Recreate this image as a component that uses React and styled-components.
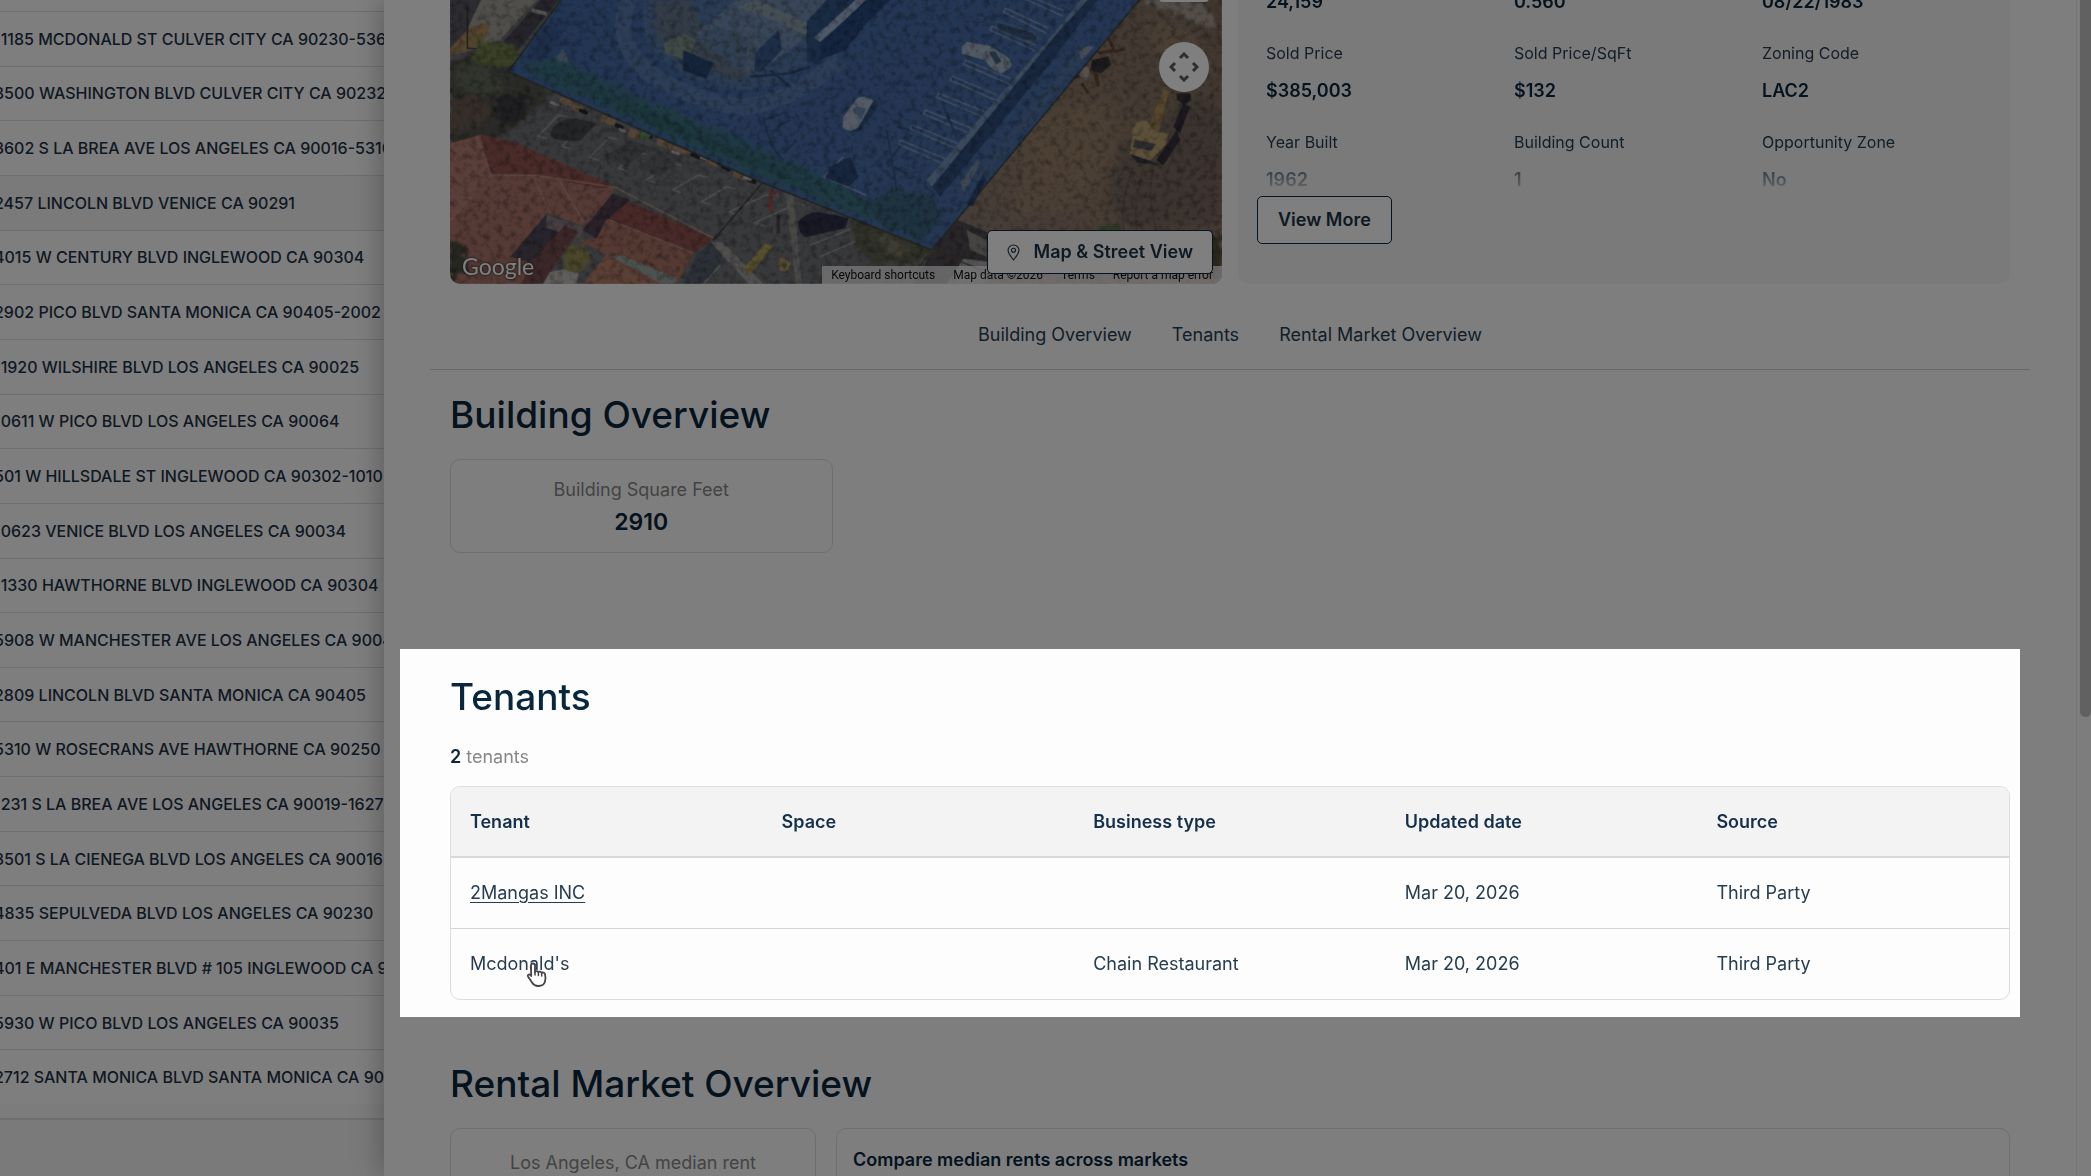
import React from "react";
import styled, { createGlobalStyle, css } from "styled-components";

const color = {
  ink: "#08263c",
  text: "#263c50",
  muted: "#878787",
  line: "#dcdcdc",
  surface: "#fdfdfd",
  tint: "#f4f4f4",
};

const GlobalStyle = createGlobalStyle`
  *, *::before, *::after { box-sizing: border-box; }
  body {
    margin: 0;
    background: ${color.surface};
    color: ${color.text};
    font: 400 18px/28px Inter, "Liberation Sans", sans-serif;
  }
  h2, p, ul, dl, dd { margin: 0; padding: 0; }
  button { font: inherit; color: inherit; cursor: pointer; }
  a { color: inherit; text-decoration: none; }
`;

/* ---------- Page frame ---------- */

const Page = styled.div`
  display: grid;
  grid-template-columns: 384px minmax(0, 1fr);
  grid-template-rows: minmax(0, 1fr);
  height: 100vh;
  overflow: hidden;
`;

const ListPane = styled.aside`
  display: flex;
  flex-direction: column;
  min-height: 0;
  padding-top: 11px;
  overflow: hidden;
`;

const AddressList = styled.ul`
  flex: 1;
  display: grid;
  grid-auto-rows: minmax(0, 1fr);
  list-style: none;
`;

const AddressRow = styled.li`
  display: flex;
  align-items: center;
  margin-left: -6px;
  border-top: 1px solid ${color.line};
  background: ${(p) => (p.$hovered ? "#f5f5f5" : "transparent")};
  color: #1f3346;
  font-size: 16px;
  font-weight: 500;
  line-height: 24px;
  white-space: nowrap;
`;

const ListEdge = styled.div`
  height: 14px;
  background: #f8f8f8;
`;

const ListFooter = styled.footer`
  height: 58px;
  border-top: 2px solid ${color.line};
  background: #f4f4f4;
`;

const Drawer = styled.div`
  position: relative;
  z-index: 1;
  display: grid;
  grid-template-columns: minmax(0, 1fr) 15px;
  background: ${color.surface};
  box-shadow: -4px 0 26px rgba(0, 0, 0, 0.26);
`;

const Content = styled.main`
  margin-top: -12px;
  padding: 0 66px;
`;

const ScrollTrack = styled.div`
  display: flex;
  justify-content: flex-end;
  border-left: 1px solid #efefef;
  background: #fafafa;
`;

const ScrollThumb = styled.div`
  width: 11px;
  height: 61vh;
  border-radius: 0 0 6px 6px;
  background: #c2c2c2;
`;

/* ---------- Map and facts ---------- */

const Summary = styled.div`
  display: grid;
  grid-template-columns: 1fr 1fr;
  gap: 16px;
  height: 296px;
`;

const MapFrame = styled.div`
  position: relative;
  overflow: hidden;
  border-radius: 0 0 10px 10px;
`;

const Aerial = styled.svg`
  display: block;
  width: 100%;
  height: 100%;
`;

const MapControls = styled.div`
  position: absolute;
  top: 0;
  right: 13px;
  display: flex;
  flex-direction: column;
  gap: 40px;
`;

const ZoomControl = styled.button`
  width: 50px;
  height: 14px;
  border: 0;
  border-radius: 0 0 4px 4px;
  background: #fff;
`;

const CameraControl = styled.button`
  display: grid;
  place-items: center;
  width: 50px;
  height: 50px;
  padding: 0;
  border: 0;
  border-radius: 50%;
  background: #fff;
`;

const MapLogo = styled.span`
  position: absolute;
  left: 12px;
  bottom: 4px;
  color: #fff;
  font-family: Lato, sans-serif;
  font-size: 23px;
  line-height: 28px;
  text-shadow: 0 0 3px #333, 0 0 2px #444;
`;

const Attribution = styled.div`
  position: absolute;
  right: 0;
  bottom: 0;
  display: flex;
  height: 18px;
  color: #111;
  font: 400 12px/18px Roboto, sans-serif;
  white-space: nowrap;
`;

const AttributionItem = styled.a`
  padding: 0 9px;
  background: rgba(245, 245, 245, 0.75);
`;

const outlined = css`
  border: 1px solid ${color.ink};
  border-radius: 5px;
  background: #fff;
  color: #1b3246;
  font-size: 18px;
  font-weight: 600;
  white-space: nowrap;
`;

const StreetViewButton = styled.button`
  ${outlined}
  position: absolute;
  right: 9px;
  bottom: 10px;
  display: flex;
  align-items: center;
  gap: 14px;
  height: 44px;
  padding: 0 19px;
`;

const FactsCard = styled.section`
  border-radius: 0 0 10px 10px;
  background: ${color.tint};
`;

const Facts = styled.dl`
  display: grid;
  grid-template-columns: repeat(3, 1fr);
  align-content: start;
  row-gap: 25px;
  height: 208px;
  padding-left: 28px;
  overflow: hidden;
  mask-image: linear-gradient(#000 162px, transparent 210px);
`;

const FactLabel = styled.dt`
  margin-bottom: 12px;
  font-size: 16px;
  line-height: 24px;
`;

const FactValue = styled.dd`
  color: ${color.ink};
  font-weight: 600;
`;

const ViewMoreButton = styled.button`
  ${outlined}
  height: 48px;
  margin-left: 19px;
  padding: 0 20px;
`;

const SectionNav = styled.nav`
  display: flex;
  justify-content: center;
  gap: 40px;
  margin: 0 -20px;
  padding: 37px 0 20px;
  border-bottom: 1px solid #cfcfcf;
`;

/* ---------- Sections ---------- */

const Section = styled.section`
  padding-top: ${(p) => p.$top}px;
`;

const Heading = styled.h2`
  color: ${color.ink};
  font-size: 37px;
  font-weight: 500;
  line-height: 48px;
`;

const CardRow = styled.div`
  display: grid;
  grid-template-columns: ${(p) => p.$columns};
  gap: ${(p) => p.$gap}px;
  margin-top: 20px;
`;

const Card = styled.div`
  min-height: ${(p) => p.$minHeight || 0}px;
  padding: ${(p) => p.$pad};
  border: 1px solid ${color.line};
  border-radius: 10px;
  text-align: ${(p) => p.$align || "left"};
`;

const CardLabel = styled.p`
  color: ${color.muted};
`;

const CardValue = styled.p`
  color: ${color.ink};
  font-size: 23px;
  font-weight: 600;
  line-height: 36px;
`;

const CardTitle = styled.p`
  color: ${color.ink};
  font-weight: 600;
`;

/* The highlighted section dims everything around it. */
const Spotlight = styled.section`
  position: relative;
  margin: 96px -10px 0 -50px;
  padding: 24px 10px 17px 50px;
  background: ${color.surface};
  box-shadow: 0 0 0 200vmax rgba(0, 0, 0, 0.5);
  z-index: 2;
`;

const Count = styled.p`
  margin: 22px 0 15px;
  color: ${color.muted};

  strong {
    color: ${color.ink};
    font-weight: 600;
  }
`;

const TableFrame = styled.div`
  border: 1px solid ${color.line};
  border-radius: 10px;
  overflow: hidden;
`;

const Table = styled.table`
  width: 100%;
  border-spacing: 0;
  table-layout: fixed;
  text-align: left;

  th, td {
    height: 71px;
    padding: 0 19px;
  }
  td {
    height: 70px;
  }
  th {
    border-bottom: 2px solid #d8d8d8;
    background: #f3f3f3;
    color: #14304a;
    font-weight: 600;
  }
  tbody tr + tr td {
    height: 71px;
    border-top: 1px solid #d4d4d4;
  }
`;

const TenantLink = styled.a`
  text-decoration: underline;
  text-underline-offset: 3px;
`;

const Hovered = styled.span`
  position: relative;
`;

const Pointer = styled.svg`
  position: absolute;
  left: 55px;
  top: 8px;
`;

const addresses = [
  "11185 MCDONALD ST CULVER CITY CA 90230-5360",
  "8500 WASHINGTON BLVD CULVER CITY CA 90232",
  "3602 S LA BREA AVE LOS ANGELES CA 90016-5310",
  "2457 LINCOLN BLVD VENICE CA 90291",
  "4015 W CENTURY BLVD INGLEWOOD CA 90304",
  "2902 PICO BLVD SANTA MONICA CA 90405-2002",
  "11920 WILSHIRE BLVD LOS ANGELES CA 90025",
  "10611 W PICO BLVD LOS ANGELES CA 90064",
  "501 W HILLSDALE ST INGLEWOOD CA 90302-1010",
  "10623 VENICE BLVD LOS ANGELES CA 90034",
  "11330 HAWTHORNE BLVD INGLEWOOD CA 90304",
  "5908 W MANCHESTER AVE LOS ANGELES CA 90045",
  "2809 LINCOLN BLVD SANTA MONICA CA 90405",
  "5310 W ROSECRANS AVE HAWTHORNE CA 90250",
  "1231 S LA BREA AVE LOS ANGELES CA 90019-1627",
  "3501 S LA CIENEGA BLVD LOS ANGELES CA 90016",
  "4835 SEPULVEDA BLVD LOS ANGELES CA 90230",
  "401 E MANCHESTER BLVD # 105 INGLEWOOD CA 90301",
  "5930 W PICO BLVD LOS ANGELES CA 90035",
  "2712 SANTA MONICA BLVD SANTA MONICA CA 90404",
];

const facts = [
  [null, "24,159"],
  [null, "0.560"],
  [null, "08/22/1983"],
  ["Sold Price", "$385,003"],
  ["Sold Price/SqFt", "$132"],
  ["Zoning Code", "LAC2"],
  ["Year Built", "1962"],
  ["Building Count", "1"],
  ["Opportunity Zone", "No"],
];

const columns = ["Tenant", "Space", "Business type", "Updated date", "Source"];

/* ---------- Aerial photo drawing ---------- */

const stalls = [
  [1660, 36, 1790, 100], [1620, 90, 1755, 152], [1540, 192, 1678, 252], [1500, 240, 1636, 300],
  [1460, 292, 1598, 350], [1420, 342, 1560, 400], [1380, 386, 1518, 446], [1345, 432, 1482, 492],
  [1710, -10, 1838, 48],
];

const lowerStalls = [
  [265, 408, 325, 345], [335, 438, 395, 380], [418, 472, 478, 412], [505, 505, 560, 455],
  [588, 540, 670, 490], [668, 570, 745, 525], [755, 605, 830, 560], [835, 636, 960, 580], [915, 668, 1040, 610],
];

function AerialView() {
  return (
    <Aerial viewBox="0 -36 2316 888" preserveAspectRatio="xMidYMax slice" aria-hidden="true">
      <defs>
        <filter id="grain" x="0" y="0" width="100%" height="100%" colorInterpolationFilters="sRGB">
          <feTurbulence type="fractalNoise" baseFrequency="0.05" numOctaves="4" seed="8" />
          <feColorMatrix values="0 0 0 0 0  0 0 0 0 0  0 0 0 0 0  0 2.4 0 0 -1.05" />
        </filter>
        <filter id="leaf" x="-10%" y="-10%" width="120%" height="120%" colorInterpolationFilters="sRGB">
          <feTurbulence type="fractalNoise" baseFrequency="0.05" numOctaves="3" seed="3" />
          <feDisplacementMap in="SourceGraphic" scale="44" xChannelSelector="R" yChannelSelector="G" />
          <feGaussianBlur stdDeviation="3" />
        </filter>
        <filter id="soft"><feGaussianBlur stdDeviation="14" /></filter>
        <filter id="photo" x="0" y="0" width="100%" height="100%" colorInterpolationFilters="sRGB">
          <feGaussianBlur stdDeviation="2" />
          <feColorMatrix type="saturate" values="0.88" />
        </filter>
        <linearGradient id="dirt" x1="0" y1="1" x2="1" y2="0">
          <stop offset="0" stopColor="#8d7c76" />
          <stop offset="0.45" stopColor="#957b66" />
          <stop offset="1" stopColor="#7d6e5e" />
        </linearGradient>
        <linearGradient id="lot" x1="0" y1="0" x2="1" y2="1">
          <stop offset="0" stopColor="#3f6cae" />
          <stop offset="1" stopColor="#4871b0" />
        </linearGradient>
      </defs>

      <g filter="url(#photo)">
      <rect y="-36" width="2316" height="888" fill="#717276" />

      {/* street corner */}
      <path d="M0-36H110L70 70 0 160Z" fill="#5b5864" />
      <path d="M110-36H300L240 20 150 120 60 150 0 160 50 90Z" fill="#a39e95" />
      <path d="M60 80l60-14-14 50-60 40-46 10v-20z" fill="#a98a58" />
      <path d="M270 0l80-30-150 186-40-30z" fill="#4c4953" />
      <path d="M245 30l45 12" stroke="#aaa" strokeWidth="12" />
      <path d="M52 20v125h26" fill="none" stroke="#333" strokeWidth="4" />

      {/* planting beside the lot */}
      <g filter="url(#leaf)">
        <path d="M0 190l80-50 120 20 110 120-80 70-70 60-160 30z" fill="#55564d" />
        <path d="M90 120l100 20 20 50-90 10-60-30z" fill="#728143" />
        <path d="M20 190l90 10 60 70-80 10-80-20z" fill="#646a58" />
        <path d="M0 300l80-10 60 60-90 40-50 20z" fill="#6f5c4f" />
        <path d="M130 290l110-10-20 80-70 30z" fill="#3e3e42" />
      </g>

      {/* lower parking lot */}
      <g stroke="#acacae" strokeWidth="5" fill="none" opacity=".7">
        {lowerStalls.map(([a, b, c, d]) => (
          <path key={a} d={`M${a + 26} ${b + 8}L${a} ${b}L${c} ${d}l26 6`} />
        ))}
      </g>
      <path d="M310 380q40-36 90-20l40 10-50 52q-70 6-90-14z" fill="#484a50" />
      <path d="M460 470l80-50 60 20-70 60z" fill="#5e6065" />
      <path d="M560 500l80-50 60 20-70 60z" fill="#626469" />
      <path d="M330 290l40 12-6 18-38-14zM372 312l30 10-6 20-34-14zM458 342l40 18-6 20-38-16zM540 384l30 10-6 26-32-12zM624 414l42 14-6 20-40-14zM672 432l50 20-6 16-48-18zM768 472l40 16-6 14-36-14zM850 510l40 18-6 14-36-14z" fill="#a98867" />
      <path d="M392 332l16 6M500 376l14 6M590 404l12 6M726 464l20 8M820 500l16 8M898 540l16 6" stroke="#2a2a2e" strokeWidth="12" strokeLinecap="round" />
      <path d="M300 306l28 10M506 386l22 10M664 454l24 8M880 530l24 10M750 470l30 10" stroke="#bdbdc0" strokeWidth="8" />
      <path d="M572 390l30 14-8 18-26-8z" fill="#5f9560" />

      {/* tiled roofs */}
      <path d="M0 430L90 404 190 424 495 560 420 684 290 640 200 770 250 790 240 852H0Z" fill="#b27468" />
      <path d="M90 404L190 424 495 560 450 566 260 524 124 524Z" fill="#985651" />
      <path d="M0 430L80 410 124 524 0 670Z" fill="#bb7c6f" />
      <path d="M80 410l44 114 136 2 235 36M124 524L0 660M250 530l50 110M330 545l70 120" fill="none" stroke="#c48e80" strokeWidth="4" />
      <path d="M180 770L290 642 345 676 250 790Z" fill="#51495a" />
      <path d="M290 642l112 42-14 34-100-36z" fill="#8d7d83" />
      <path d="M345 676l40 20-110 156h-60l30-70z" fill="#7d4d4f" />
      <path d="M398 690l90-110 50 20-90 120z" fill="#544052" />
      <path d="M535 605L790 716 730 760 470 660Z" fill="#96504d" />
      <path d="M470 656L730 760 680 852H600L480 770 385 720 440 715Z" fill="#b07263" />
      <path d="M470 656l260 102M496 562l294 152" stroke="#ba958b" strokeWidth="4" fill="none" />
      <path d="M400 852l70-90 130 90z" fill="#bb7d67" />
      <path d="M480 768l30-4 170 70-6 18h-40z" fill="#9ba59e" />
      <path d="M345 740l60-6 20 50-50 40-30-20z" fill="#958c4d" filter="url(#leaf)" />
      <path d="M0 720l40 10 14 80-54 40z" fill="#4c513f" filter="url(#leaf)" />
      <path d="M280 852l20-36 40-8 46 12-8 32z" fill="#c0bbba" />
      <path d="M790 720l30 60-60 72H700l40-90z" fill="#566070" />
      <path d="M780 724l40 4 120 124h-44z" fill="#a09e9d" />
      <path d="M760 852l50-56" stroke="#9c9a98" strokeWidth="5" />
      <path d="M945 730l24 8-70 88-18-20z" fill="#b0a04e" />
      <path d="M992 776l20 6 2 28h-22zM985 792l20 20 16-24" fill="#b0a04e" stroke="#b0a04e" strokeWidth="5" />
      <path d="M940 545L790 720" stroke="#45443f" strokeWidth="5" />
      <path d="M1005 570l24 10 26 272h-18z" fill="#92908f" />
      <path d="M960 590v46M955 576l26 3" stroke="#a35459" strokeWidth="14" fill="none" />
      <path d="M985 645v55" stroke="#51404a" strokeWidth="10" />
      <path d="M1046 664q30-34 70-26l80 16-10 30-120 28q-26-18-20-48z" fill="#2f334c" />
      <path d="M1080 736l150-60M1110 770l130-56" stroke="#a2a2a4" strokeWidth="4" />

      {/* excavation site */}
      <path d="M2068-36H2316V852H1500L1440 750Z" fill="url(#dirt)" />
      <g filter="url(#soft)" opacity=".55">
        <path d="M1760 350l220-60 30 170-160 170-170 20z" fill="#a4866b" />
        <path d="M2010 440l230-160 76 60v330l-280 20-70-90z" fill="#675d58" />
        <path d="M2070 40l170 60 60 120-170-20z" fill="#a3886a" />
      </g>
      <path d="M2080 20q70-10 100 20l110 50 10-10-30-60-70-30h-90z" fill="#a99d91" filter="url(#leaf)" />
      <path d="M2050 500q-40 100-30 190M2080 505q-30 100-20 190M2110 505q-20 90 10 190" fill="none" stroke="#5d5048" strokeWidth="6" opacity=".5" />
      <path d="M1975 115l20 40 30-10M1945 160l50-10M1870 235l60-30 10 40M1895 250l20 30M1935 190l10 70" stroke="#68493a" strokeWidth="9" fill="none" />
      <path d="M1925 180l50-10 8 24-30 26-30-10z" fill="#37343b" />
      <path d="M1880 220l20-30 20 20-10 34z" fill="#ada296" />
      <path d="M2120 480l60-90 10 30-50 76zM2170 380l30-70 20 10-30 80z" fill="#37323f" />
      <path d="M2180 280l40 0 4 20-20 14-24-14z" fill="#3a3538" />
      <path d="M2140 266l16 10-22 86-12 50-30-6 14-56z" fill="#b08d54" />
      <path d="M2058 368l30-8 18 26 48 16-4 30-50 50-62-16 10-60-4-16z" fill="#bca06c" />
      <path d="M2054 418l64 14-14 20-56-10z" fill="#5b5a62" />
      <path d="M2040 462l60 20 22 12-60-6z" fill="#40384a" />

      {/* trees and street below the parcel */}
      <path d="M1500 650l120 50v152H1390l80-140z" fill="#514c51" />
      <path d="M1550 690l60 30v50l-50-20z" fill="#8e8985" />
      <path d="M1490 852l50-76 80 10v66z" fill="#a8a6a6" />
      <g filter="url(#leaf)">
        <path d="M1210 650l110 30 120 64-40 50-120 0-70-50z" fill="#5f604d" />
        <path d="M1260 700l60 10 60 40-50 20z" fill="#7d7a65" />
        <path d="M2270 700h46v120h-36z" fill="#535038" />
        <path d="M1950 680l50-8 20 30h-70z" fill="#54703f" />
      </g>

      {/* selected parcel */}
      <path d="M358-36L175 215 930 545 1445 750 2068 0 2095-36Z" fill="url(#lot)" />
      <path d="M250 110l70-60 10 70-40 50-60 20z" fill="#365c98" filter="url(#soft)" />
      <path d="M305 185l36-40 20 50z" fill="#738aac" />
      <path d="M550-36Q470 120 600 220 740 310 880 320 1020 310 1170 180" fill="none" stroke="#537cb6" strokeWidth="50" />
      <path d="M590-36Q550 110 640 180 740 260 880 270 980 266 1080 190L1210 60V-36Z" fill="#5077ad" />
      <path d="M610 0l110 0 60 120 130 100-50 26-150-60-90-70z" fill="#637790" filter="url(#leaf)" />
      <path d="M640 130l60-30 36 20-20 60-70-20z" fill="#7c9389" />
      <path d="M740 100L900-36H1190L1070 70V110L930 215 890 220Z" fill="#6f8cb7" />
      <path d="M740 110l60-30 90 30 0 100-30 0z" fill="#5f7fa9" />
      <path d="M860 20l60-20 180 80-20 30-160-70z" fill="#889dae" />
      <path d="M850 30l20 150M910 70v140" stroke="#5c7787" strokeWidth="10" filter="url(#leaf)" />
      <path d="M915 160l70-70 10 60-60 66-22-2z" fill="#365c94" />
      <path d="M1070 65l92-101h92l-100 110-50 120-34-10z" fill="#31578f" />
      <path d="M1092 112l164-148h40L1110 126z" fill="#99b2d6" />
      <path d="M1110 180V130l176-166h70l-110 110-60 76z" fill="#264b87" />
      <path d="M700 150l90 40-20 46-72-24z" fill="#29497d" />
      <path d="M900 230l120-10 60-20M960 210l60 50" stroke="#2f4d7e" strokeWidth="7" fill="none" />
      <path d="M940 350q20 100 60 130M940 360l60-20M980 380l40-20M1000 460l40-40" stroke="#335589" strokeWidth="6" fill="none" />
      <g filter="url(#leaf)">
        <path d="M215 190L320 176 620 310 920 440 1160 550 1400 690 1420 726 1180 630 930 530 560 366 240 226Z" fill="#387389" />
        <path d="M300 215l300 120 300 130 250 110-200-60-350-150z" fill="#326978" />
        <path d="M1240 600l100-30 100 20 40 60-60 70-120-40z" fill="#376785" />
      </g>
      <g stroke="#87a0c8" strokeWidth="4" fill="none">
        {stalls.map(([a, b, c, d]) => (
          <path key={a} d={`M${c} ${d}L${a} ${b}l6-12L${c + 4} ${d - 16}`} />
        ))}
        <path d="M1120 530l60-60M1120 530l130 56" />
      </g>
      <path d="M1445 560L1850 80 1940-36H1920L1820 90 1430 540Z" fill="#7393c0" />
      <path d="M1470 590L1800 190 1970-36H1946L1830 90 1446 560Z" fill="#2e5086" />
      <path d="M1600 500l300-370 20 20-290 350-100 120z" fill="#5075a8" opacity=".8" />
      <path d="M1886 160q20-30 46-20l-36 40z" fill="#8d98b2" />
      <path d="M1140 500l60-30 26 60-30 30-70-26z" fill="#2a4b82" />
      <path d="M1536 140l14-14 70 12 50 32q24 18 8 36l-24 14-30-14-20-26-68-18z" fill="#a2b3cb" />
      <path d="M1616 154l20 0 18 30-16 10z" fill="#3f6880" />
      <path d="M1640 64l100 30q34 16 20 30l-40-4-80-34z" fill="#3a5987" stroke="#6583aa" strokeWidth="4" />
      <path d="M1196 370l50-66q30-14 42 10l-56 76q-20 10-36-10z" fill="#33578b" />
      <path d="M1180 350l40-54q20-14 50 6l-46 82q-20 16-46 0z" fill="#a6b7cf" />
      <path d="M1206 330l14-12 28 8-14 34z" fill="#6a87ad" />
      <path d="M1310 390l30 180M1340 380l40 10M1350 440l-40 50 60 30M1480 320l40 90" stroke="#345688" strokeWidth="6" fill="none" />
      <path d="M1530 550l50-70 12 8-50 90z" fill="#768fab" />
      <path d="M1550 610l50-90 8 20-40 80z" fill="#2c4c83" />
      <path d="M358-36L175 215 930 545 1445 750 2068 0 2095-36" fill="none" stroke="#3d4a44" strokeWidth="5" />
      <path d="M1445 750l-50 70M1445 750l150 60" stroke="#5b5340" strokeWidth="4" />
      </g>

      <rect y="-36" width="2316" height="888" filter="url(#grain)" opacity=".3" />
    </Aerial>
  );
}

function CameraIcon() {
  return (
    <svg width="30" height="30" viewBox="0 0 30 30" fill="none" stroke="#5c5c5c" strokeWidth="3">
      <path d="M11 6l4-4 4 4M11 24l4 4 4-4M6 11l-4 4 4 4M24 11l4 4-4 4" />
    </svg>
  );
}

function PinIcon() {
  return (
    <svg width="13" height="17" viewBox="0 0 13 17" fill="none" stroke="#1b3246" strokeWidth="1.1">
      <path d="M6.500 16C4 12.500 1 9.500 1 6.300a5.500 5.300 0 0 1 11 0C12 9.500 9 12.500 6.500 16Z" />
      <circle cx="6.500" cy="6.300" r="2" />
    </svg>
  );
}

function HandPointer() {
  return (
    <Pointer width="24" height="27" viewBox="0 0 24 27" aria-hidden="true">
      <path
        d="M8 2.500c1.300 0 2 .8 2 2V11c.3-1.200 3-1.200 3.400.3.500-1 2.900-.9 3.300.7.600-.8 2.900-.6 3.300 1 .5 2 .6 5.300 0 7.500-.8 3-3 4.500-6.500 4.500s-5.300-1.300-6.800-4L3 15.500c-.8-1.500 1-2.800 2.200-1.700L6.200 15 6 4.500c0-1.200.8-2 2-2Z"
        fill="#fff" stroke="#444" strokeWidth="1.800" strokeLinejoin="round"
      />
      <path d="M10 10.500V14M13.400 11.500V14.500M16.700 12.300V15" stroke="#444" strokeWidth="1.500" strokeLinecap="round" />
    </Pointer>
  );
}

export default function App() {
  return (
    <>
      <GlobalStyle />
      <Page>
        <ListPane>
          <AddressList>
            {addresses.map((address) => (
              <AddressRow key={address} $hovered={address.startsWith("2457")}>
                {address}
              </AddressRow>
            ))}
          </AddressList>
          <ListEdge />
          <ListFooter />
        </ListPane>

        <Drawer>
          <Content>
            <Summary>
              <MapFrame>
                <AerialView />
                <MapControls>
                  <ZoomControl aria-label="Zoom out" />
                  <CameraControl aria-label="Map camera controls">
                    <CameraIcon />
                  </CameraControl>
                </MapControls>
                <MapLogo>Google</MapLogo>
                <Attribution>
                  <AttributionItem href="#shortcuts">Keyboard shortcuts</AttributionItem>
                  <AttributionItem as="span">Map data ©2026</AttributionItem>
                  <AttributionItem href="#terms">Terms</AttributionItem>
                  <AttributionItem href="#report">Report a map error</AttributionItem>
                </Attribution>
                <StreetViewButton>
                  <PinIcon />
                  Map &amp; Street View
                </StreetViewButton>
              </MapFrame>

              <FactsCard>
                <Facts>
                  {facts.map(([label, value]) => (
                    <div key={value}>
                      {label && <FactLabel>{label}</FactLabel>}
                      <FactValue>{value}</FactValue>
                    </div>
                  ))}
                </Facts>
                <ViewMoreButton>View More</ViewMoreButton>
              </FactsCard>
            </Summary>

            <SectionNav>
              <a href="#building">Building Overview</a>
              <a href="#tenants">Tenants</a>
              <a href="#rental">Rental Market Overview</a>
            </SectionNav>

            <Section id="building" $top={21}>
              <Heading>Building Overview</Heading>
              <CardRow $columns="repeat(4, 1fr)" $gap={10}>
                <Card $pad="16px 16px 12px" $align="center">
                  <CardLabel>Building Square Feet</CardLabel>
                  <CardValue>2910</CardValue>
                </Card>
              </CardRow>
            </Section>

            <Spotlight id="tenants">
              <Heading>Tenants</Heading>
              <Count>
                <strong>2</strong> tenants
              </Count>
              <TableFrame>
                <Table>
                  <thead>
                    <tr>
                      {columns.map((name) => (
                        <th key={name} scope="col">{name}</th>
                      ))}
                    </tr>
                  </thead>
                  <tbody>
                    <tr>
                      <td><TenantLink href="#2mangas">2Mangas INC</TenantLink></td>
                      <td />
                      <td />
                      <td>Mar 20, 2026</td>
                      <td>Third Party</td>
                    </tr>
                    <tr>
                      <td>
                        <Hovered>
                          Mcdonald's
                          <HandPointer />
                        </Hovered>
                      </td>
                      <td />
                      <td>Chain Restaurant</td>
                      <td>Mar 20, 2026</td>
                      <td>Third Party</td>
                    </tr>
                  </tbody>
                </Table>
              </TableFrame>
            </Spotlight>

            <Section id="rental" $top={43}>
              <Heading>Rental Market Overview</Heading>
              <CardRow $columns="366fr 1174fr" $gap={20}>
                <Card $pad="20px 16px" $minHeight={200} $align="center">
                  <CardLabel>Los Angeles, CA median rent</CardLabel>
                </Card>
                <Card $pad="17px 16px" $minHeight={200}>
                  <CardTitle>Compare median rents across markets</CardTitle>
                </Card>
              </CardRow>
            </Section>
          </Content>
          <ScrollTrack>
            <ScrollThumb />
          </ScrollTrack>
        </Drawer>
      </Page>
    </>
  );
}
